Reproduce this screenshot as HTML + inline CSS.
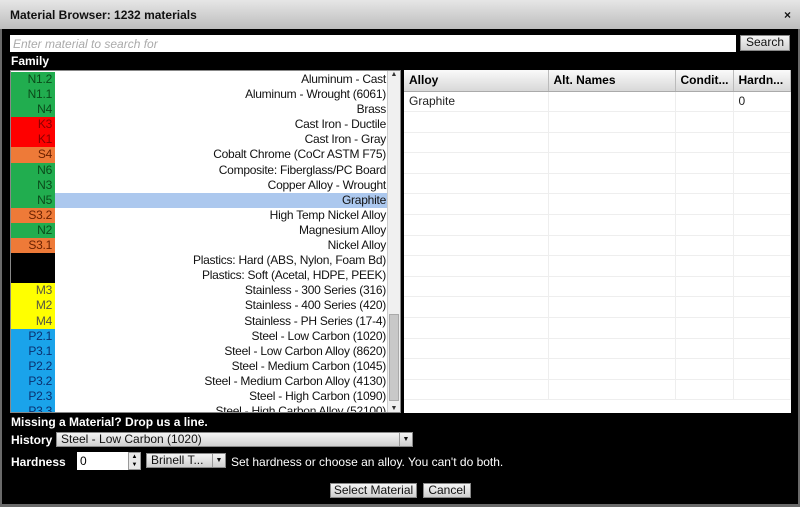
<!DOCTYPE html><html><head><style>
*{margin:0;padding:0;box-sizing:border-box}
body{width:800px;height:507px;background:#6a6a6a;font-family:"Liberation Sans",Arial,sans-serif;font-size:12px;position:relative;overflow:hidden}
.abs{position:absolute}
#title{left:0;top:0;width:800px;height:29px;background:linear-gradient(#e6e6e6,#bdbdbd);font-weight:bold;font-size:12px;padding:8px 0 0 10px;color:#111}
#body{left:2px;top:29px;width:796px;height:475px;background:#000}
.w{color:#fff;font-weight:bold}
#list{left:10px;top:70px;width:391px;height:343px;background:#fff;overflow:hidden;border:1px solid #888;padding-top:1px}
.row{height:15.1px;line-height:15px;position:relative;white-space:nowrap;letter-spacing:-0.25px}
.row .c{position:absolute;left:0;top:0;width:44px;height:100%;text-align:right;padding-right:3px}
.row .n{position:absolute;right:14px;color:#111}
.sel{background:#acc8ee}
#sb{position:absolute;right:0;top:0;width:13px;height:100%;background:#f0f0f0;border-left:1px solid #ccc}
table{border-collapse:collapse}
#tbl{left:404px;top:70px;width:387px;height:343px;background:#fff}
#tbl td{border-right:1px solid #eee;border-bottom:1px solid #eee;height:20.6px;padding-left:5px;color:#222}
#tbl th{height:21px;text-align:left;padding-left:5px;background:linear-gradient(#fafafa,#d8d8d8);border-right:1px solid #bbb;border-bottom:1px solid #aaa;font-size:12px}
.btn{background:linear-gradient(#f4f4f4,#cfcfcf);border:1px solid #888;text-align:center;color:#111;height:15px;line-height:13px}
</style></head><body>
<div id="title" class="abs">Material Browser: 1232 materials<span style="position:absolute;right:9px;top:8px">×</span></div>
<div id="body" class="abs"></div>
<div class="abs" style="left:10px;top:35px;width:726px;height:17px;background:#fff;color:#aaa;font-style:italic;padding:2px 3px">Enter material to search for</div>
<div class="abs btn" style="left:740px;top:35px;width:50px;height:16px">Search</div>
<div class="abs w" style="left:11px;top:54px">Family</div>
<div id="list" class="abs">
<div class="row"><div class="c" style="background:#21ad4f;color:#0a4a1a">N1.2</div><div class="n">Aluminum - Cast</div></div>
<div class="row"><div class="c" style="background:#21ad4f;color:#0a4a1a">N1.1</div><div class="n">Aluminum - Wrought (6061)</div></div>
<div class="row"><div class="c" style="background:#21ad4f;color:#0a4a1a">N4</div><div class="n">Brass</div></div>
<div class="row"><div class="c" style="background:#fe0000;color:#800">K3</div><div class="n">Cast Iron - Ductile</div></div>
<div class="row"><div class="c" style="background:#fe0000;color:#800">K1</div><div class="n">Cast Iron - Gray</div></div>
<div class="row"><div class="c" style="background:#ee7a38;color:#6a2000">S4</div><div class="n">Cobalt Chrome (CoCr ASTM F75)</div></div>
<div class="row"><div class="c" style="background:#21ad4f;color:#0a4a1a">N6</div><div class="n">Composite: Fiberglass/PC Board</div></div>
<div class="row"><div class="c" style="background:#21ad4f;color:#0a4a1a">N3</div><div class="n">Copper Alloy - Wrought</div></div>
<div class="row sel"><div class="c" style="background:#21ad4f;color:#0a4a1a">N5</div><div class="n">Graphite</div></div>
<div class="row"><div class="c" style="background:#ee7a38;color:#6a2000">S3.2</div><div class="n">High Temp Nickel Alloy</div></div>
<div class="row"><div class="c" style="background:#21ad4f;color:#0a4a1a">N2</div><div class="n">Magnesium Alloy</div></div>
<div class="row"><div class="c" style="background:#ee7a38;color:#6a2000">S3.1</div><div class="n">Nickel Alloy</div></div>
<div class="row"><div class="c" style="background:#000"></div><div class="n">Plastics: Hard (ABS, Nylon, Foam Bd)</div></div>
<div class="row"><div class="c" style="background:#000"></div><div class="n">Plastics: Soft (Acetal, HDPE, PEEK)</div></div>
<div class="row"><div class="c" style="background:#ffff00;color:#554">M3</div><div class="n">Stainless - 300 Series (316)</div></div>
<div class="row"><div class="c" style="background:#ffff00;color:#554">M2</div><div class="n">Stainless - 400 Series (420)</div></div>
<div class="row"><div class="c" style="background:#ffff00;color:#554">M4</div><div class="n">Stainless - PH Series (17-4)</div></div>
<div class="row"><div class="c" style="background:#1aa3ea;color:#0a3070">P2.1</div><div class="n">Steel - Low Carbon (1020)</div></div>
<div class="row"><div class="c" style="background:#1aa3ea;color:#0a3070">P3.1</div><div class="n">Steel - Low Carbon Alloy (8620)</div></div>
<div class="row"><div class="c" style="background:#1aa3ea;color:#0a3070">P2.2</div><div class="n">Steel - Medium Carbon (1045)</div></div>
<div class="row"><div class="c" style="background:#1aa3ea;color:#0a3070">P3.2</div><div class="n">Steel - Medium Carbon Alloy (4130)</div></div>
<div class="row"><div class="c" style="background:#1aa3ea;color:#0a3070">P2.3</div><div class="n">Steel - High Carbon (1090)</div></div>
<div class="row"><div class="c" style="background:#1aa3ea;color:#0a3070">P3.3</div><div class="n">Steel - High Carbon Alloy (52100)</div></div>
<div id="sb"><div style="font-size:7px;text-align:center;color:#333">▲</div><div style="position:absolute;left:1px;right:1px;top:243px;height:87px;background:#c8c8c8;border:1px solid #aaa"></div><div style="position:absolute;bottom:0;width:100%;font-size:7px;text-align:center;color:#333">▼</div></div>
</div>
<div id="tbl" class="abs"><table style="width:387px">
<tr><th style="width:144px">Alloy</th><th style="width:127px">Alt. Names</th><th style="width:58px">Condit...</th><th>Hardn...</th></tr>
<tr><td>Graphite</td><td></td><td></td><td>0</td></tr>
<tr><td></td><td></td><td></td><td></td></tr><tr><td></td><td></td><td></td><td></td></tr><tr><td></td><td></td><td></td><td></td></tr><tr><td></td><td></td><td></td><td></td></tr><tr><td></td><td></td><td></td><td></td></tr><tr><td></td><td></td><td></td><td></td></tr><tr><td></td><td></td><td></td><td></td></tr><tr><td></td><td></td><td></td><td></td></tr><tr><td></td><td></td><td></td><td></td></tr><tr><td></td><td></td><td></td><td></td></tr><tr><td></td><td></td><td></td><td></td></tr><tr><td></td><td></td><td></td><td></td></tr><tr><td></td><td></td><td></td><td></td></tr><tr><td></td><td></td><td></td><td></td></tr>
</table></div>
<div class="abs w" style="left:11px;top:415px">Missing a Material? Drop us a line.</div>
<div class="abs w" style="left:11px;top:433px">History</div>
<div class="abs btn" style="left:56px;top:432px;width:357px;text-align:left;padding-left:4px">Steel - Low Carbon (1020)<span style="position:absolute;right:0;top:0;width:13px;height:13px;border-left:1px solid #999;font-size:7px;text-align:center">▼</span></div>
<div class="abs w" style="left:11px;top:455px">Hardness</div>
<div class="abs" style="left:77px;top:452px;width:51px;height:18px;background:#fff;padding:2px 3px">0</div>
<div class="abs" style="left:128px;top:452px;width:13px;height:18px;background:#e8e8e8;border:1px solid #999;font-size:6px;text-align:center;line-height:8px">▲<br>▼</div>
<div class="abs btn" style="left:146px;top:453px;width:80px;text-align:left;padding-left:4px">Brinell T...<span style="position:absolute;right:0;top:0;width:13px;height:13px;border-left:1px solid #999;font-size:7px;text-align:center">▼</span></div>
<div class="abs" style="left:231px;top:455px;color:#fff">Set hardness or choose an alloy. You can't do both.</div>
<div class="abs btn" style="left:330px;top:483px;width:87px">Select Material</div>
<div class="abs btn" style="left:423px;top:483px;width:48px">Cancel</div>
</body></html>
